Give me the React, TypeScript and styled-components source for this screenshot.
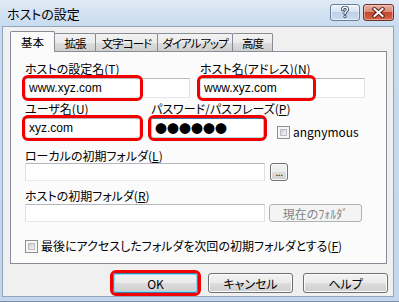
import React from 'react';
import styled, { createGlobalStyle, css } from 'styled-components';

const Global = createGlobalStyle`
  html, body { margin: 0; padding: 0; width: 399px; height: 302px; overflow: hidden; background: #c6d9ee; }
  body {
    font-family: "Noto Sans CJK JP", "Noto Sans", sans-serif;
    font-size: 12px;
    font-feature-settings: "palt";
    color: #000;
  }
  u { text-decoration: underline; text-underline-offset: 1px; }
`;

const Window = styled.div`
  box-sizing: border-box;
  width: 399px;
  height: 302px;
  display: flex;
  flex-direction: column;
  padding: 0 5px 4px 2px;
  background: linear-gradient(to bottom, #dfeaf6 0px, #c9dbef 26px, #c3d6ec 100%);
  border-bottom: 1px solid #7b8da6;
`;

const TitleBar = styled.div`
  height: 26px;
  flex-shrink: 0;
  display: flex;
  align-items: flex-start;
  padding-left: 5px;
`;

const TitleText = styled.div`
  flex: 1;
  font-size: 13px;
  line-height: 16px;
  margin-top: 6px;
  white-space: nowrap;
`;

const CaptionGroup = styled.div`
  display: flex;
  gap: 3px;
  margin-top: 4px;
`;

const CaptionButton = styled.div<{ $kind: 'help' | 'close' }>`
  box-sizing: border-box;
  height: 17px;
  width: ${(p) => (p.$kind === 'help' ? 30 : 31)}px;
  border-radius: 3px;
  display: flex;
  align-items: center;
  justify-content: center;
  ${(p) =>
    p.$kind === 'help'
      ? css`
          border: 1px solid #687d99;
          background: linear-gradient(to bottom, #eef4fb 0%, #d6e3f1 45%, #bdd0e7 50%, #cbdcef 100%);
          box-shadow: inset 0 0 0 1px rgba(255, 255, 255, 0.55);
        `
      : css`
          border: 1px solid #6e3126;
          background: linear-gradient(to bottom, #eab0a2 0%, #da8b76 45%, #c5472e 50%, #d2674d 100%);
          box-shadow: inset 0 0 0 1px rgba(255, 220, 210, 0.5);
        `}
`;

const HelpGlyph = () => (
  <svg width="10" height="13" viewBox="0 0 10 13">
    <g fill="none" strokeLinecap="round">
      <path d="M2.6 3.8 C2.6 1.9 3.9 1.3 5 1.3 C6.4 1.3 7.4 2.2 7.4 3.4 C7.4 4.7 6.3 5.1 5.6 5.8 C5.1 6.3 5 6.8 5 7.8" stroke="#3b4d66" strokeWidth="3.2" />
      <circle cx="5" cy="10.6" r="1.6" fill="#3b4d66" />
      <path d="M2.6 3.8 C2.6 1.9 3.9 1.3 5 1.3 C6.4 1.3 7.4 2.2 7.4 3.4 C7.4 4.7 6.3 5.1 5.6 5.8 C5.1 6.3 5 6.8 5 7.8" stroke="#ffffff" strokeWidth="1.4" />
      <circle cx="5" cy="10.6" r="0.8" fill="#ffffff" />
    </g>
  </svg>
);

const CloseGlyph = () => (
  <svg width="13" height="11" viewBox="0 0 13 11">
    <g strokeLinecap="square">
      <path d="M2.5 2 L10.5 9 M10.5 2 L2.5 9" stroke="#5a2118" strokeWidth="4" />
      <path d="M2.5 2 L10.5 9 M10.5 2 L2.5 9" stroke="#ffffff" strokeWidth="2" />
    </g>
  </svg>
);

const Client = styled.div`
  flex: 1;
  box-sizing: border-box;
  background: #f0f0f0;
  border: 1px solid #92a4bb;
  padding: 4px 0 0 7px;
  display: flex;
  flex-direction: column;
`;

const TabRow = styled.div`
  height: 20px;
  display: flex;
  align-items: flex-end;
  position: relative;
  z-index: 1;
`;

const Tab = styled.div<{ $w: number; $active?: boolean }>`
  box-sizing: border-box;
  width: ${(p) => p.$w}px;
  border: 1px solid #898c95;
  border-bottom: none;
  border-radius: 2px 2px 0 0;
  display: flex;
  align-items: center;
  justify-content: center;
  white-space: nowrap;
  font-size: 11.5px;
  letter-spacing: -1px;
  & + & { margin-left: -1px; }
  ${(p) =>
    p.$active
      ? css`
          height: 21px;
          margin-bottom: -1px;
          background: #fbfbfb;
          padding-bottom: 1px;
          position: relative;
          z-index: 2;
          letter-spacing: 0;
        `
      : css`
          height: 18px;
          padding-top: 1px;
          background: linear-gradient(to bottom, #f3f3f3 0%, #ebebeb 50%, #dddddd 51%, #cfcfcf 100%);
        `}
`;

const Panel = styled.div`
  box-sizing: border-box;
  width: 377px;
  height: 213px;
  border: 1px solid #898c95;
  background: #fbfbfb;
  padding: 10px 0 0 14px;
  display: flex;
  flex-direction: column;
`;

const Row = styled.div<{ $mt?: number; $gap?: number }>`
  display: flex;
  align-items: flex-end;
  margin-top: ${(p) => p.$mt ?? 0}px;
  gap: ${(p) => p.$gap ?? 0}px;
`;

const Field = styled.div<{ $w?: number; $ml?: number; $mt?: number }>`
  display: flex;
  flex-direction: column;
  align-items: flex-start;
  ${(p) => (p.$w ? `width: ${p.$w}px;` : '')}
  margin-left: ${(p) => p.$ml ?? 0}px;
  margin-top: ${(p) => p.$mt ?? 0}px;
`;

const Label = styled.div`
  height: 14px;
  line-height: 14px;
  white-space: nowrap;
  margin-bottom: 2px;
`;

const BoxWrap = styled.div<{ $mt?: number }>`
  position: relative;
  display: flex;
  align-items: center;
  margin-top: ${(p) => p.$mt ?? 0}px;
`;

const TextBox = styled.div<{ $w: number; $h?: number; $focused?: boolean }>`
  box-sizing: border-box;
  width: ${(p) => p.$w}px;
  height: ${(p) => p.$h ?? 20}px;
  background: #ffffff;
  border: 1px solid;
  border-color: #b5b8be #dcdfe5 #e3e9ef #dcdfe5;
  border-radius: 1px;
  padding: 0 3px;
  display: flex;
  align-items: center;
  font-family: "Liberation Sans", Arial, sans-serif;
  font-size: 12px;
  white-space: nowrap;
  ${(p) =>
    p.$focused &&
    css`
      border-color: #3d7bad #a4c9e3 #b7d9ed #a4c9e3;
    `}
`;

const Dots = styled.span`
  font-family: "Noto Sans CJK JP", sans-serif;
  font-feature-settings: normal;
  font-size: 12px;
  letter-spacing: 0;
  padding-top: 1px;
`;

const Highlight = styled.span<{ $w?: number }>`
  position: absolute;
  left: -3px;
  top: -3px;
  bottom: -3px;
  ${(p) => (p.$w ? `width: ${p.$w}px;` : 'right: -3px;')}
  box-sizing: border-box;
  border: 3px solid #f20000;
  border-radius: 6px;
  pointer-events: none;
`;

const CheckRow = styled.div<{ $mb?: number; $mt?: number; $ml?: number }>`
  display: flex;
  align-items: center;
  gap: 3px;
  line-height: 14px;
  margin-bottom: ${(p) => p.$mb ?? 0}px;
  margin-top: ${(p) => p.$mt ?? 0}px;
  margin-left: ${(p) => p.$ml ?? 0}px;
  white-space: nowrap;
`;

const CheckBox = styled.span`
  box-sizing: border-box;
  width: 13px;
  height: 13px;
  border: 1px solid #8f8f8f;
  background: #f6f6f6;
  padding: 2px;
  display: inline-flex;
  flex-shrink: 0;
  &::after {
    content: '';
    flex: 1;
    background: linear-gradient(135deg, #c5c9cf 0%, #e4e6e9 60%, #f4f4f4 100%);
    border: 1px solid #b9bcc1;
    box-sizing: border-box;
  }
`;

const SmallText = styled.span`
  font-size: 12px;
`;

const PushButton = styled.div<{ $w: number; $h?: number; $default?: boolean; $disabled?: boolean; $ml?: number }>`
  box-sizing: border-box;
  position: relative;
  width: ${(p) => p.$w}px;
  height: ${(p) => p.$h ?? 20}px;
  margin-left: ${(p) => p.$ml ?? 0}px;
  border: 1px solid #707070;
  border-radius: 3px;
  background: linear-gradient(to bottom, #f2f2f2 0%, #ebebeb 50%, #dddddd 51%, #cfcfcf 100%);
  box-shadow: inset 0 0 0 1px #fbfbfb;
  display: flex;
  align-items: center;
  justify-content: center;
  white-space: nowrap;
  font-size: 12px;
  ${(p) =>
    p.$default &&
    css`
      border-color: #3c7fb1;
      box-shadow: inset 0 0 0 1px #8fdcf8;
    `}
  ${(p) =>
    p.$disabled &&
    css`
      border-color: #adb2b5;
      background: #f4f4f4;
      box-shadow: none;
      color: #838383;
    `}
`;

const EllipsisText = styled.span`
  font-family: "Liberation Sans", Arial, sans-serif;
  font-size: 10px;
  line-height: 10px;
  margin-top: 2px;
  letter-spacing: -0.5px;
`;

const ButtonRow = styled.div`
  display: flex;
  justify-content: flex-end;
  gap: 10px;
  margin-top: 9px;
  padding-right: 5px;
`;

const ButtonWrap = styled.div`
  position: relative;
`;

const tabs = [
  { label: '基本', w: 45, active: true },
  { label: '拡張', w: 42 },
  { label: '文字コード', w: 63 },
  { label: 'ダイアルアップ', w: 76 },
  { label: '高度', w: 41 },
];

export default function App() {
  return (
    <>
      <Global />
      <Window>
        <TitleBar>
          <TitleText>ホストの設定</TitleText>
          <CaptionGroup>
            <CaptionButton $kind="help">
              <HelpGlyph />
            </CaptionButton>
            <CaptionButton $kind="close">
              <CloseGlyph />
            </CaptionButton>
          </CaptionGroup>
        </TitleBar>
        <Client>
          <TabRow>
            {tabs.map((t) => (
              <Tab key={t.label} $w={t.w} $active={t.active}>
                {t.label}
              </Tab>
            ))}
          </TabRow>
          <Panel>
            <Row $gap={10}>
              <Field $w={165}>
                <Label>
                  ホストの設定名(<u>T</u>)
                </Label>
                <BoxWrap>
                  <TextBox $w={165}>www.xyz.com</TextBox>
                  <Highlight $w={121} />
                </BoxWrap>
              </Field>
              <Field $w={165}>
                <Label>
                  ホスト名(アドレス)(<u>N</u>)
                </Label>
                <BoxWrap>
                  <TextBox $w={165}>www.xyz.com</TextBox>
                  <Highlight $w={119} />
                </BoxWrap>
              </Field>
            </Row>
            <Row $mt={4}>
              <Field $w={115}>
                <Label>
                  ユーザ名(<u>U</u>)
                </Label>
                <BoxWrap>
                  <TextBox $w={115}>xyz.com</TextBox>
                  <Highlight />
                </BoxWrap>
              </Field>
              <Field $w={113} $ml={11}>
                <Label>
                  パスワード/パスフレーズ(<u>P</u>)
                </Label>
                <BoxWrap>
                  <TextBox $w={113} $focused>
                    <Dots>●●●●●●</Dots>
                  </TextBox>
                  <Highlight />
                </BoxWrap>
              </Field>
              <CheckRow $mb={-1} $ml={13}>
                <CheckBox />
                <SmallText>angnymous</SmallText>
              </CheckRow>
            </Row>
            <Field $mt={11}>
              <Label>
                ローカルの初期フォルダ(<u>L</u>)
              </Label>
              <BoxWrap $mt={-2}>
                <TextBox $w={240} $h={18} />
                <PushButton $w={18} $h={18} $ml={5}>
                  <EllipsisText>...</EllipsisText>
                </PushButton>
              </BoxWrap>
            </Field>
            <Field $mt={8}>
              <Label>
                ホストの初期フォルダ(<u>R</u>)
              </Label>
              <BoxWrap $mt={-1}>
                <TextBox $w={240} $h={18} />
                <PushButton $w={93} $h={18} $ml={4} $disabled>
                  現在のﾌｫﾙﾀﾞ
                </PushButton>
              </BoxWrap>
            </Field>
            <CheckRow $mt={17}>
              <CheckBox />
              <SmallText>
                最後にアクセスしたフォルダを次回の初期フォルダとする(<u>F</u>)
              </SmallText>
            </CheckRow>
          </Panel>
          <ButtonRow>
            <ButtonWrap>
              <PushButton $w={85} $default>
                OK
              </PushButton>
              <Highlight />
            </ButtonWrap>
            <PushButton $w={85}>キャンセル</PushButton>
            <PushButton $w={85}>ヘルプ</PushButton>
          </ButtonRow>
        </Client>
      </Window>
    </>
  );
}
